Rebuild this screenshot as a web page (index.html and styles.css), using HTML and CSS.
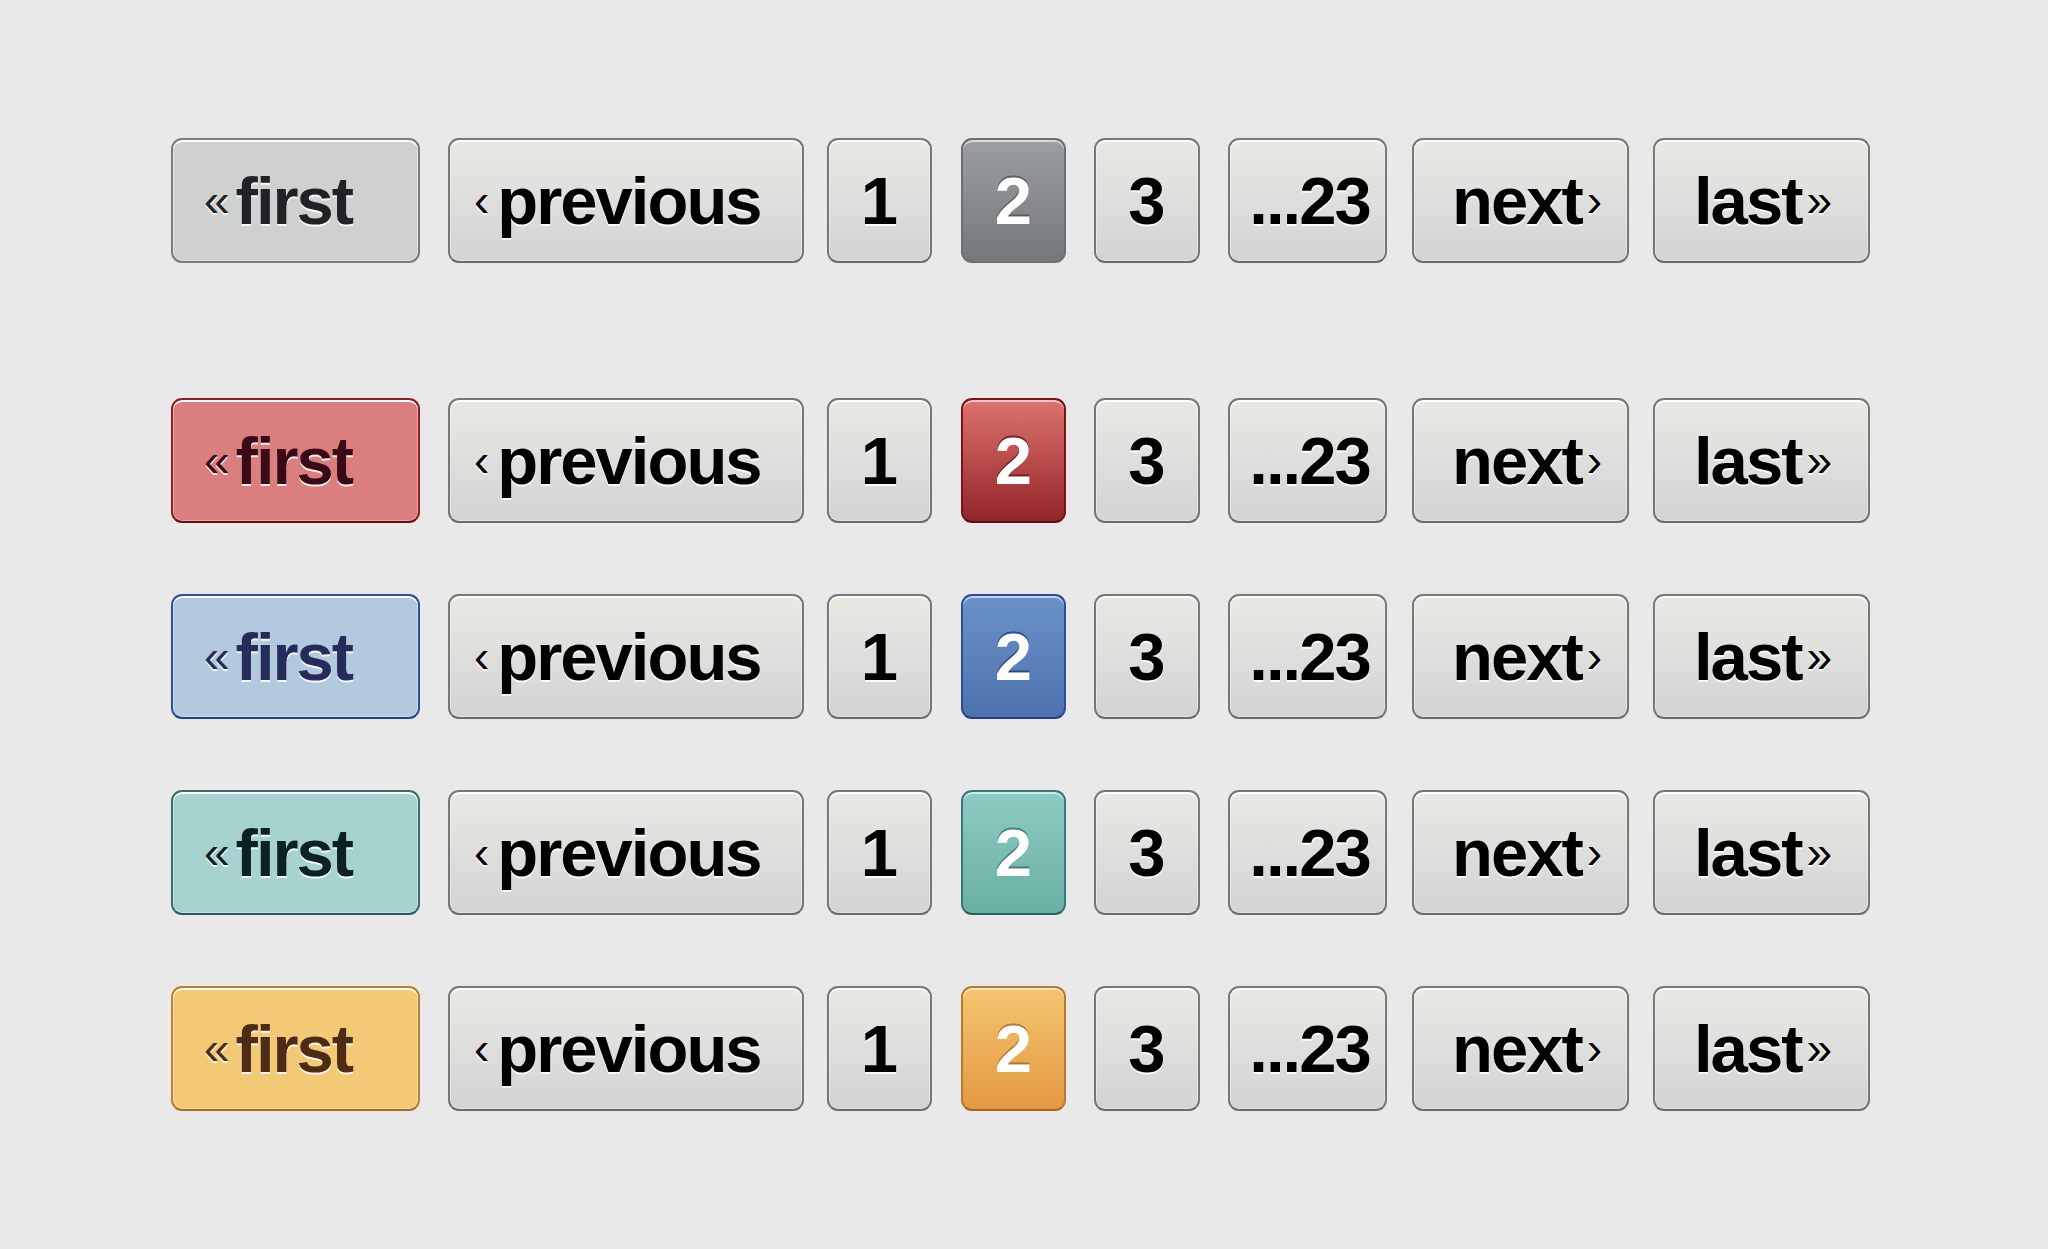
FILE: index.html
```html
<!DOCTYPE html>
<html lang="en">
<head>
  <meta charset="UTF-8">
  <title>Pagination styles</title>
  <link rel="stylesheet" href="styles.css">
</head>
<body>
  <div class="showcase">

    <div class="pager theme-gray">
      <a class="btn btn-first tinted"><span class="arrow arrow-l">«</span>first</a>
      <a class="btn btn-prev"><span class="arrow arrow-l">‹</span>previous</a>
      <a class="btn btn-num btn-one">1</a>
      <a class="btn btn-num btn-two current">2</a>
      <a class="btn btn-num btn-three">3</a>
      <a class="btn btn-more">...23</a>
      <a class="btn btn-next">next<span class="arrow arrow-r">›</span></a>
      <a class="btn btn-last">last<span class="arrow arrow-r">»</span></a>
    </div>

    <div class="pager theme-red">
      <a class="btn btn-first tinted"><span class="arrow arrow-l">«</span>first</a>
      <a class="btn btn-prev"><span class="arrow arrow-l">‹</span>previous</a>
      <a class="btn btn-num btn-one">1</a>
      <a class="btn btn-num btn-two current">2</a>
      <a class="btn btn-num btn-three">3</a>
      <a class="btn btn-more">...23</a>
      <a class="btn btn-next">next<span class="arrow arrow-r">›</span></a>
      <a class="btn btn-last">last<span class="arrow arrow-r">»</span></a>
    </div>

    <div class="pager theme-blue">
      <a class="btn btn-first tinted"><span class="arrow arrow-l">«</span>first</a>
      <a class="btn btn-prev"><span class="arrow arrow-l">‹</span>previous</a>
      <a class="btn btn-num btn-one">1</a>
      <a class="btn btn-num btn-two current">2</a>
      <a class="btn btn-num btn-three">3</a>
      <a class="btn btn-more">...23</a>
      <a class="btn btn-next">next<span class="arrow arrow-r">›</span></a>
      <a class="btn btn-last">last<span class="arrow arrow-r">»</span></a>
    </div>

    <div class="pager theme-teal">
      <a class="btn btn-first tinted"><span class="arrow arrow-l">«</span>first</a>
      <a class="btn btn-prev"><span class="arrow arrow-l">‹</span>previous</a>
      <a class="btn btn-num btn-one">1</a>
      <a class="btn btn-num btn-two current">2</a>
      <a class="btn btn-num btn-three">3</a>
      <a class="btn btn-more">...23</a>
      <a class="btn btn-next">next<span class="arrow arrow-r">›</span></a>
      <a class="btn btn-last">last<span class="arrow arrow-r">»</span></a>
    </div>

    <div class="pager theme-orange">
      <a class="btn btn-first tinted"><span class="arrow arrow-l">«</span>first</a>
      <a class="btn btn-prev"><span class="arrow arrow-l">‹</span>previous</a>
      <a class="btn btn-num btn-one">1</a>
      <a class="btn btn-num btn-two current">2</a>
      <a class="btn btn-num btn-three">3</a>
      <a class="btn btn-more">...23</a>
      <a class="btn btn-next">next<span class="arrow arrow-r">›</span></a>
      <a class="btn btn-last">last<span class="arrow arrow-r">»</span></a>
    </div>

  </div>
</body>
</html>
```

FILE: styles.css
```css
body {
  margin: 0;
  background: #e9e9e9;
  font-family: 'Liberation Sans', Arial, sans-serif;
}
.showcase {
  display: flex;
  flex-direction: column;
  gap: 71px;
  padding: 138px 0 0 171px;
}
.pager {
  display: flex;
}
.pager.theme-gray {
  margin-bottom: 64px;
}

/* base button */
.btn {
  box-sizing: border-box;
  display: flex;
  align-items: center;
  height: 125px;
  border: 2px solid #757778;
  border-bottom-color: #696b6c;
  border-radius: 11px;
  background: linear-gradient(#e9e9e4, #d3d4d3);
  box-shadow: inset 0 2px 0 #fff, inset 0 0 0 1px rgba(255, 255, 255, 0.35);
  color: #000;
  font-size: 67px;
  font-weight: bold;
  line-height: 1;
  letter-spacing: -2px;
  text-shadow: 0 2px 0 rgba(255, 255, 255, 0.85);
  white-space: nowrap;
  cursor: pointer;
}
.btn-first {
  width: 249px;
  padding-left: 31px;
}
.btn-prev {
  width: 356px;
  margin-left: 28px;
  padding-left: 24px;
}
.btn-prev .arrow-l {
  margin-right: 8px;
}
.btn-num {
  width: 105px;
  justify-content: center;
  letter-spacing: 0;
}
.btn-one {
  margin-left: 23px;
}
.btn-two {
  margin-left: 29px;
}
.btn-three {
  width: 106px;
  margin-left: 28px;
}
.btn-more {
  width: 159px;
  margin-left: 28px;
  justify-content: center;
  padding-left: 4px;
}
.btn-next {
  width: 217px;
  margin-left: 25px;
  padding-left: 38px;
}
.btn-last {
  width: 217px;
  margin-left: 24px;
  padding-left: 39px;
}
.arrow {
  font-size: 46px;
  font-weight: normal;
  letter-spacing: 0;
  position: relative;
  top: -1px;
}
.arrow-l {
  margin-right: 6px;
}
.arrow-r {
  margin-left: 5px;
}

/* current page */
.btn.current {
  color: #fff;
}

/* gray */
.theme-gray .tinted {
  background: #cfd1d0;
  border-color: #797b7c;
  color: #222226;
}
.theme-gray .current {
  background: linear-gradient(#9c9fa2, #75787b);
  border-color: #6c6f72;
  box-shadow: inset 0 2px 0 rgba(255, 255, 255, 0.6);
  text-shadow: 0 -2px 0 rgba(60, 62, 66, 0.6);
}

/* red */
.theme-red .tinted {
  background: #db7e7e;
  border-color: #8e1d24;
  border-bottom-color: #5e0f17;
  color: #3b0a17;
}
.theme-red .current {
  background: linear-gradient(#dd736e, #922528);
  border-color: #7a1418;
  border-bottom-color: #5e0f14;
  box-shadow: inset 0 2px 0 rgba(255, 255, 255, 0.6);
  text-shadow: 0 -2px 0 rgba(90, 10, 16, 0.7);
}

/* blue */
.theme-blue .tinted {
  background: #b3c9de;
  border-color: #2d50a2;
  border-bottom-color: #233f86;
  color: #252c5c;
}
.theme-blue .current {
  background: linear-gradient(#6b91c9, #4e72ae);
  border-color: #2d4c9c;
  border-bottom-color: #213c86;
  box-shadow: inset 0 2px 0 rgba(255, 255, 255, 0.6);
  text-shadow: 0 -2px 0 rgba(24, 48, 110, 0.7);
}

/* teal */
.theme-teal .tinted {
  background: #a6d3cf;
  border-color: #3b6c72;
  border-bottom-color: #2d5660;
  color: #0c2222;
}
.theme-teal .current {
  background: linear-gradient(#8ccbc3, #69b0a3);
  border-color: #3c7578;
  border-bottom-color: #2e5e62;
  box-shadow: inset 0 2px 0 rgba(255, 255, 255, 0.6);
  text-shadow: 0 -2px 0 rgba(30, 80, 80, 0.6);
}

/* orange */
.theme-orange .tinted {
  background: #f2ca76;
  border-color: #bb812f;
  border-bottom-color: #a86c22;
  color: #4e2b14;
}
.theme-orange .current {
  background: linear-gradient(#f3c56f, #e59842);
  border-color: #b97a2c;
  border-bottom-color: #a4641e;
  box-shadow: inset 0 2px 0 rgba(255, 255, 255, 0.6);
  text-shadow: 0 -2px 0 rgba(140, 80, 20, 0.6);
}
```
